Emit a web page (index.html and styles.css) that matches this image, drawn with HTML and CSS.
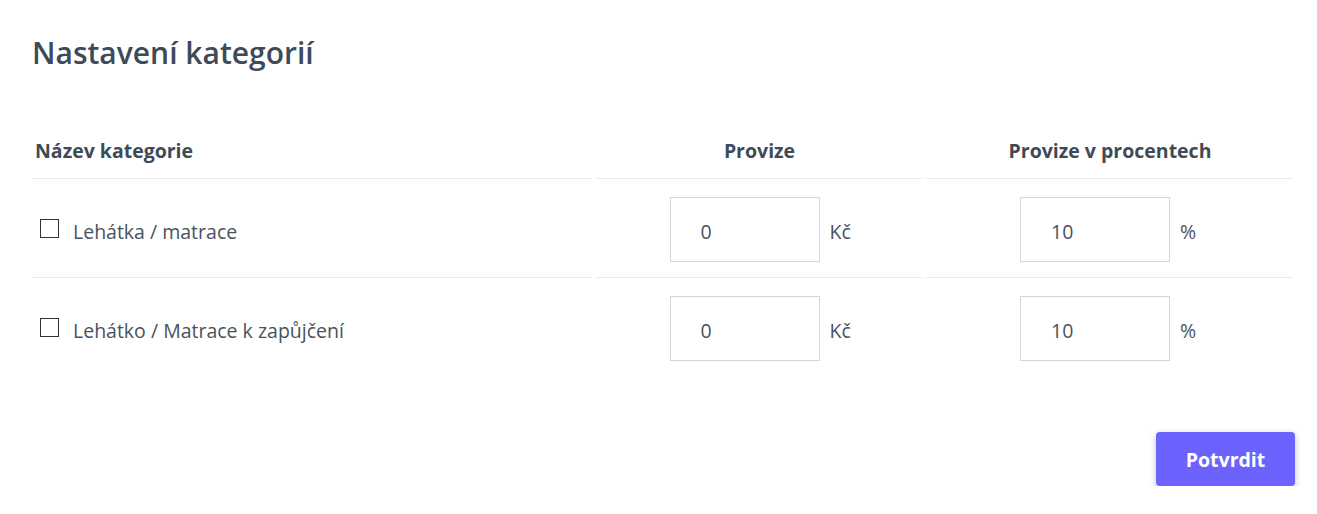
FILE: index.html
```html
<!DOCTYPE html>
<html>
<head>
	<title>Nastavení kategorií</title>
	<link rel="stylesheet" href="styles.css">
</head>
<body>
	<div id="page">
		<h1 class="title">Nastavení kategorií</h1>

		<table class="cats">
			<tr>
				<th class="name">Název kategorie</th>
				<th>Provize</th>
				<th>Provize v procentech</th>
			</tr>
			<tr>
				<td class="name"><label><span class="check"></span>Lehátka / matrace</label></td>
				<td><div class="field"><input type="text" value="0"><span class="unit">Kč</span></div></td>
				<td><div class="field"><input type="text" value="10"><span class="unit">%</span></div></td>
			</tr>
			<tr class="last">
				<td class="name"><label><span class="check"></span>Lehátko / Matrace k zapůjčení</label></td>
				<td><div class="field"><input type="text" value="0"><span class="unit">Kč</span></div></td>
				<td><div class="field"><input type="text" value="10"><span class="unit">%</span></div></td>
			</tr>
		</table>

		<div class="actions">
			<button class="submit">Potvrdit</button>
		</div>
	</div>
</body>
</html>
```

FILE: styles.css
```css
body {
	margin: 0;
	font-family: "Open Sans", sans-serif;
	color: #47535e;
	background: #fff;
}

#page {
	padding: 33px 22px 0 32px;
}

.title {
	margin: 0;
	font-size: 30px;
	font-weight: 600;
	line-height: 40px;
	color: #3e4a56;
}

.cats {
	margin: 50px 0 0 -4px;
	border-collapse: separate;
	border-spacing: 4px 0;
	width: 1269px;
}

.cats th {
	font-size: 19.5px;
	font-weight: 700;
	color: #3e4a56;
	height: 55px;
	padding: 0;
	text-align: center;
	border-bottom: 1px solid #e8eaec;
	vertical-align: middle;
}

.cats th.name {
	text-align: left;
	padding-left: 3px;
	width: 557px;
}

.cats th:nth-child(2) {
	width: 327px;
}

.cats td {
	height: 98px;
	padding: 0;
	border-bottom: 1px solid #e8eaec;
	vertical-align: middle;
}

.cats tr.last td {
	border-bottom: none;
}

.cats td.name {
	padding-left: 8px;
}

label {
	display: flex;
	align-items: center;
	padding-top: 6px;
	font-size: 19.5px;
	color: #47535e;
}

.check {
	display: inline-block;
	width: 17px;
	height: 17px;
	border: 1.5px solid #333;
	margin-right: 14px;
	margin-top: -6px;
}

.field {
	display: flex;
	justify-content: center;
	align-items: center;
	gap: 10px;
	margin-top: 2px;
}

.field input {
	width: 150px;
	height: 65px;
	box-sizing: border-box;
	border: 1px solid #d3d6d9;
	padding: 4px 0 0 30px;
	font-family: "Open Sans", sans-serif;
	font-size: 19.5px;
	color: #47535e;
	outline: none;
}

.unit {
	font-size: 19.5px;
	width: 20px;
	padding-top: 5px;
	color: #47535e;
}

.actions {
	display: flex;
	justify-content: flex-end;
	margin-top: 56px;
}

.submit {
	width: 139px;
	height: 54px;
	border: none;
	border-radius: 4px;
	background: #6c63ff;
	color: #fff;
	font-family: "Open Sans", sans-serif;
	font-size: 19.5px;
	font-weight: 700;
	box-shadow: 0 2px 6px rgba(0, 0, 0, 0.25);
}
```
